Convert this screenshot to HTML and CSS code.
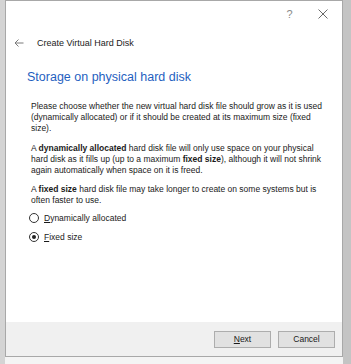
FILE: index.html
```html
<!DOCTYPE html>
<html lang="en">
<head>
    <meta charset="UTF-8">
    <title>Create Virtual Hard Disk</title>
    <link rel="stylesheet" href="styles.css">
</head>
<body>

    <div class="desk">

        <div class="window">

            <div class="titlebar">
                <span class="caption-btn help">?</span>
                <span class="caption-btn close">
                    <svg width="10" height="10" viewBox="0 0 10 10"><path d="M0.5 0.5 L9.5 9.5 M9.5 0.5 L0.5 9.5" stroke="#6a6a6a" stroke-width="1" fill="none"/></svg>
                </span>
            </div>

            <div class="nav">
                <svg class="back" width="10" height="8" viewBox="0 0 10 8"><path d="M9.5 4 H1 M4.5 0.5 L1 4 L4.5 7.5" stroke="#7a7a7a" stroke-width="1" fill="none"/></svg>
                <span class="nav-title">Create Virtual Hard Disk</span>
            </div>

            <div class="page">

                <h1 class="heading">Storage on physical hard disk</h1>

                <div class="text">
                    <p>Please choose whether the new virtual hard disk file should grow as it is used (dynamically allocated) or if it should be created at its maximum size (fixed size).</p>
                    <p>A <b>dynamically allocated</b> hard disk file will only use space on your physical hard disk as it fills up (up to a maximum <b>fixed size</b>), although it will not shrink again automatically when space on it is freed.</p>
                    <p>A <b>fixed size</b> hard disk file may take longer to create on some systems but is often faster to use.</p>
                </div>

                <div class="options">
                    <label class="radio"><span class="dot"></span><span><u>D</u>ynamically allocated</span></label>
                    <label class="radio checked"><span class="dot"></span><span><u>F</u>ixed size</span></label>
                </div>

            </div>

            <div class="footer">
                <button class="btn"><u>N</u>ext</button>
                <button class="btn">Cancel</button>
            </div>

        </div>

    </div>

</body>
</html>
```

FILE: styles.css
```css
* {
    box-sizing: border-box;
}

body {
    margin: 0;
    background-color: #f4f4f4;
    font-family: "Liberation Sans", Arial, sans-serif;
    color: #1a1a1a;
}

.desk {
    width: 351px;
    height: 364px;
    display: flex;
    align-items: flex-start;
    background: linear-gradient(to right, #d4d4d4 0 5px, transparent 5px 343px, #c4c4c4 343px);
}

.window {
    margin-left: 5px;
    width: 338px;
    height: 357px;
    border: 1px solid #a8a8a8;
    background-color: #ffffff;
    display: flex;
    flex-direction: column;
}

.titlebar {
    height: 26px;
    display: flex;
    justify-content: flex-end;
    padding-right: 3px;
}

.caption-btn {
    width: 33px;
    height: 26px;
    display: flex;
    align-items: center;
    justify-content: center;
    color: #8a8a8a;
    font-size: 11px;
}

.nav {
    height: 32px;
    display: flex;
    align-items: center;
    padding-left: 8px;
}

.back {
    margin-right: 13px;
}

.nav-title {
    font-size: 9px;
    color: #222;
}

.page {
    padding-left: 21px;
    flex: 1;
}

.heading {
    margin: 10px 0 0;
    font-size: 12.5px;
    font-weight: normal;
    color: #1f5fbf;
    line-height: 16px;
}

.text {
    padding-left: 4px;
    width: 300px;
    margin-top: 16px;
    font-size: 8.5px;
    line-height: 11px;
}

.text p {
    margin: 0 0 8.5px;
}

.text p:last-child {
    margin-bottom: 0;
}

.text b {
    font-weight: bold;
}

.options {
    display: flex;
    flex-direction: column;
    gap: 8px;
    margin-top: 6px;
    padding-left: 2px;
}

.radio {
    display: flex;
    align-items: center;
    gap: 5px;
    font-size: 8.5px;
    height: 11px;
}

.radio u, .btn u {
    text-decoration: underline;
}

.dot {
    width: 10px;
    height: 10px;
    border: 1px solid #333;
    border-radius: 50%;
    display: flex;
    align-items: center;
    justify-content: center;
}

.checked .dot::after {
    content: "";
    width: 4px;
    height: 4px;
    border-radius: 50%;
    background-color: #222;
}

.footer {
    height: 34px;
    background-color: #f0f0f0;
    display: flex;
    justify-content: flex-end;
    align-items: center;
    gap: 7px;
    padding-right: 7px;
}

.btn {
    width: 57px;
    height: 17px;
    border: 1px solid #adadad;
    background-color: #e1e1e1;
    font-family: "Liberation Sans", Arial, sans-serif;
    font-size: 8.5px;
    color: #1a1a1a;
    padding: 0;
}
```
